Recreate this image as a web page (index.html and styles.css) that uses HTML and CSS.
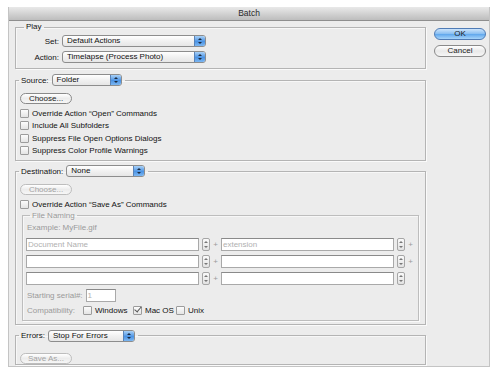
FILE: index.html
```html
<!DOCTYPE html>
<html lang="en">
<head>
<meta charset="UTF-8">
<title>Batch</title>
<link rel="stylesheet" href="styles.css">
</head>
<body>

<div class="window">
  <div class="titlebar">Batch</div>

  <div class="window-body">
    <div class="main">

      <fieldset class="group group-play">
        <legend class="legend-text">Play</legend>
        <div class="play-rows">
          <div class="form-row">
            <span class="row-label">Set:</span>
            <div class="select select-wide"><span>Default Actions</span><i class="arrows"></i></div>
          </div>
          <div class="form-row">
            <span class="row-label">Action:</span>
            <div class="select select-wide"><span>Timelapse (Process Photo)</span><i class="arrows"></i></div>
          </div>
        </div>
      </fieldset>

      <fieldset class="group group-source">
        <legend class="legend-ctrl">
          <span>Source:</span>
          <div class="select select-source"><span>Folder</span><i class="arrows"></i></div>
        </legend>
        <div class="group-inner">
          <button class="pill">Choose...</button>
          <div class="checks">
            <label class="check"><i class="box"></i>Override Action “Open” Commands</label>
            <label class="check"><i class="box"></i>Include All Subfolders</label>
            <label class="check"><i class="box"></i>Suppress File Open Options Dialogs</label>
            <label class="check"><i class="box"></i>Suppress Color Profile Warnings</label>
          </div>
        </div>
      </fieldset>

      <fieldset class="group group-dest">
        <legend class="legend-ctrl">
          <span>Destination:</span>
          <div class="select select-dest"><span>None</span><i class="arrows"></i></div>
        </legend>
        <div class="group-inner">
          <button class="pill disabled">Choose...</button>
          <div class="checks">
            <label class="check"><i class="box"></i>Override Action “Save As” Commands</label>
          </div>

          <fieldset class="group group-naming">
            <legend class="legend-text dim">File Naming</legend>
            <div class="naming-inner">
              <div class="example dim">Example: MyFile.gif</div>

              <div class="name-row">
                <div class="field"><span class="placeholder">Document Name</span></div>
                <i class="stepper"></i><span class="plus">+</span>
                <div class="field"><span class="placeholder">extension</span></div>
                <i class="stepper"></i><span class="plus">+</span>
              </div>
              <div class="name-row">
                <div class="field"></div>
                <i class="stepper"></i><span class="plus">+</span>
                <div class="field"></div>
                <i class="stepper"></i><span class="plus">+</span>
              </div>
              <div class="name-row">
                <div class="field"></div>
                <i class="stepper"></i><span class="plus">+</span>
                <div class="field"></div>
                <i class="stepper"></i><span class="plus"></span>
              </div>

              <div class="serial-row">
                <span class="dim">Starting serial#:</span>
                <div class="field field-serial"><span class="placeholder">1</span></div>
              </div>

              <div class="compat-row">
                <span class="dim compat-label">Compatibility:</span>
                <label class="check check-win"><i class="box"></i>Windows</label>
                <label class="check check-mac"><i class="box checked"></i>Mac OS</label>
                <label class="check"><i class="box"></i>Unix</label>
              </div>
            </div>
          </fieldset>
        </div>
      </fieldset>

      <fieldset class="group group-errors">
        <legend class="legend-ctrl">
          <span>Errors:</span>
          <div class="select select-errors"><span>Stop For Errors</span><i class="arrows"></i></div>
        </legend>
        <div class="group-inner">
          <button class="pill disabled">Save As...</button>
        </div>
      </fieldset>

    </div>

    <div class="side">
      <button class="btn btn-default">OK</button>
      <button class="btn">Cancel</button>
    </div>
  </div>
</div>

</body>
</html>
```

FILE: styles.css
```css
/* Batch dialog */
body {
  margin: 0;
  padding: 7px 0 0 8px;
  background: #fff;
  font-family: 'Liberation Sans', Arial, sans-serif;
  font-size: 8px;
  color: #111;
}

.window {
  width: 480px;
  height: 359px;
  background: #ececec;
  border: 1px solid #c4c4c4;
  border-top: none;
}

.titlebar {
  height: 13px;
  line-height: 13px;
  text-align: center;
  font-size: 8.5px;
  color: #2a2a2a;
  background: linear-gradient(#e9e9e9, #bdbdbd);
  border-bottom: 1px solid #8e8e8e;
}

.window-body {
  display: flex;
  padding: 1px 0 0 6px;
}

.main {
  width: 411px;
  display: flex;
  flex-direction: column;
}

.side {
  display: flex;
  flex-direction: column;
  gap: 5px;
  margin-left: 8px;
  padding-top: 6px;
}

/* group boxes */
.group {
  margin: 0;
  padding: 0;
  min-width: 0;
  border: 1px solid #b4b4b4;
  box-shadow: 1px 1px 0 #fafafa, inset 1px 1px 0 #f7f7f7;
}

.legend-text {
  padding: 0 2px;
  margin-left: 8px;
  line-height: 10px;
}

.legend-ctrl {
  display: flex;
  align-items: center;
  gap: 3px;
  padding: 0 3px 0 2px;
  margin-left: 3px;
  height: 12px;
}

.dim {
  color: #9a9a9a;
}

.group-play .play-rows {
  display: flex;
  flex-direction: column;
  gap: 4px;
  padding: 3px 0 5px;
}

.form-row {
  display: flex;
  align-items: center;
}

.row-label {
  width: 43px;
  text-align: right;
  margin-right: 3px;
}

.group-source {
  margin-top: 5px;
}

.group-dest {
  margin-top: 4px;
}

.group-errors {
  margin-top: 5px;
}

.group-inner {
  padding: 7px 0 3px 4px;
}

.group-errors .group-inner {
  padding: 11px 0 0 4px;
}

/* popup menus */
.select {
  position: relative;
  height: 10px;
  line-height: 10px;
  border: 1px solid #8d8d8d;
  border-radius: 3px;
  background: linear-gradient(#ffffff, #f1f1f1 50%, #e6e6e6);
  padding-left: 4px;
  color: #111;
  box-sizing: content-box;
}

.select .arrows {
  position: absolute;
  right: 0;
  top: 0;
  bottom: 0;
  width: 10px;
  border-left: 1px solid #5a83b7;
  border-radius: 0 2px 2px 0;
  background: linear-gradient(#a9d1f7, #4d94e4 55%, #7cb7f2);
}

.select .arrows::before,
.select .arrows::after {
  content: "";
  position: absolute;
  left: 3px;
  border-left: 2px solid transparent;
  border-right: 2px solid transparent;
}

.select .arrows::before {
  top: 2px;
  border-bottom: 2px solid #1a2a40;
}

.select .arrows::after {
  bottom: 2px;
  border-top: 2px solid #1a2a40;
}

.select-wide {
  width: 138px;
}

.select-source {
  width: 64px;
}

.select-dest {
  width: 73px;
}

.select-errors {
  width: 81px;
}

/* buttons */
.pill {
  display: block;
  width: 52px;
  height: 11px;
  padding: 0;
  font: inherit;
  line-height: 9px;
  color: #222;
  border: 1px solid #8a8a8a;
  border-radius: 6px;
  background: linear-gradient(#ffffff, #ececec 50%, #f7f7f7);
}

.pill.disabled {
  color: #a4a4a4;
  border-color: #bdbdbd;
}

.btn {
  width: 52px;
  height: 12px;
  padding: 0;
  font: inherit;
  line-height: 10px;
  color: #222;
  border: 1px solid #8a8a8a;
  border-radius: 6px;
  background: linear-gradient(#ffffff, #e9e9e9 50%, #f6f6f6);
}

.btn-default {
  border-color: #4f7bb5;
  background: linear-gradient(#cde4fb, #86bdf1 50%, #5ea6ec 51%, #a7d4fa);
}

/* checkboxes */
.checks {
  display: flex;
  flex-direction: column;
  padding-top: 3px;
}

.check {
  display: flex;
  align-items: center;
  height: 12.5px;
}

.box {
  position: relative;
  width: 7px;
  height: 7px;
  margin-right: 3px;
  border: 1px solid #9c9c9c;
  border-radius: 1px;
  background: linear-gradient(#fcfcfc, #e4e4e4);
}

.box.checked::after {
  content: "";
  position: absolute;
  left: 2px;
  top: -2px;
  width: 3px;
  height: 6px;
  border-right: 1px solid #555;
  border-bottom: 1px solid #555;
  transform: rotate(40deg);
}

/* file naming */
.group-naming {
  margin: 0 6px 0 2px;
  border-color: #bdbdbd;
}

.group-naming .legend-text {
  margin-left: 7px;
}

.naming-inner {
  padding: 2px 0 3px 3px;
}

.example {
  line-height: 10px;
  margin-left: 1px;
  margin-bottom: 3px;
}

.name-row {
  display: flex;
  align-items: center;
  height: 17px;
}

.field {
  width: 170px;
  height: 11px;
  line-height: 11px;
  background: #fff;
  border: 1px solid #a9a9a9;
  border-top-color: #8a8a8a;
  padding-left: 1px;
}

.placeholder {
  color: #b0b0b0;
}

.stepper {
  position: relative;
  width: 6px;
  height: 11px;
  margin-left: 3px;
  border: 1px solid #a6a6a6;
  border-radius: 2px;
  background: linear-gradient(#fafafa, #e2e2e2);
}

.stepper::before,
.stepper::after {
  content: "";
  position: absolute;
  left: 1px;
  border-left: 2px solid transparent;
  border-right: 2px solid transparent;
}

.stepper::before {
  top: 2px;
  border-bottom: 2px solid #777;
}

.stepper::after {
  bottom: 2px;
  border-top: 2px solid #777;
}

.plus {
  width: 11px;
  text-align: center;
  color: #9a9a9a;
}

.serial-row {
  display: flex;
  align-items: center;
  gap: 3px;
  margin-top: 2px;
  margin-left: 1px;
}

.field-serial {
  width: 27px;
}

.compat-row {
  display: flex;
  align-items: center;
  height: 12px;
  margin-top: 3px;
  margin-left: 1px;
}

.compat-label {
  width: 56px;
}

.check-win {
  width: 50px;
}

.check-mac {
  width: 43px;
}
```
